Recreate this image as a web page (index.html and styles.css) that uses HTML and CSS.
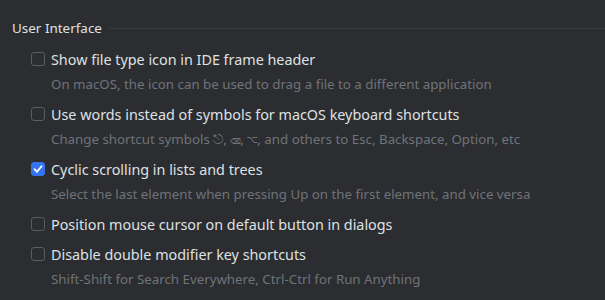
FILE: index.html
```html
<!DOCTYPE html>
<html>
<head>
<meta charset="utf-8">
<link rel="stylesheet" href="styles.css">
</head>
<body>
<div class="group">
  <div class="title-row">
    <span class="title">User Interface</span>
    <span class="sep"></span>
  </div>
  <div class="options">
    <div class="opt">
      <div class="line"><span class="cb"></span><span class="label">Show file type icon in IDE frame header</span></div>
      <div class="desc">On macOS, the icon can be used to drag a file to a different application</div>
    </div>
    <div class="opt">
      <div class="line"><span class="cb"></span><span class="label">Use words instead of symbols for macOS keyboard shortcuts</span></div>
      <div class="desc">Change shortcut symbols ⎋, ⌫, ⌥, and others to Esc, Backspace, Option, etc</div>
    </div>
    <div class="opt">
      <div class="line"><span class="cb checked"><svg viewBox="0 0 14 14" width="14" height="14"><path d="M3.5 7.2 L6 9.8 L10.6 4.2" fill="none" stroke="#fff" stroke-width="1.8" stroke-linecap="round" stroke-linejoin="round"/></svg></span><span class="label">Cyclic scrolling in lists and trees</span></div>
      <div class="desc">Select the last element when pressing Up on the first element, and vice versa</div>
    </div>
    <div class="opt">
      <div class="line"><span class="cb"></span><span class="label">Position mouse cursor on default button in dialogs</span></div>
    </div>
    <div class="opt">
      <div class="line"><span class="cb"></span><span class="label">Disable double modifier key shortcuts</span></div>
      <div class="desc">Shift-Shift for Search Everywhere, Ctrl-Ctrl for Run Anything</div>
    </div>
  </div>
</div>
</body>
</html>
```

FILE: styles.css
```css
html, body {
  margin: 0;
  padding: 0;
  background: #2b2d30;
  width: 605px;
  height: 300px;
  overflow: hidden;
}
body {
  font-family: "Noto Sans", "Open Sans", sans-serif;
  font-size: 13px;
  color: #dfe1e5;
}
.group {
  padding: 18px 0 0 12px;
}
.title-row {
  display: flex;
  align-items: center;
  gap: 7px;
  height: 20px;
  font-size: 13.45px;
}
.title {
  white-space: nowrap;
}
.sep {
  flex: 1;
  height: 1px;
  background: #393b40;
}
.options {
  padding-left: 19px;
  padding-top: 11px;
  display: flex;
  flex-direction: column;
  gap: 10px;
}
.line {
  display: flex;
  align-items: center;
  gap: 6px;
  height: 20px;
  white-space: nowrap;
  font-size: 14.35px;
}
.cb {
  width: 14px;
  height: 14px;
  box-sizing: border-box;
  border: 1px solid #5a5d63;
  border-radius: 3px;
  flex: none;
  display: flex;
}
.cb.checked {
  background: #3574f0;
  border-color: #3574f0;
}
.cb svg {
  margin: -1px;
}
.desc {
  padding-left: 20px;
  margin-top: 5px;
  height: 20px;
  line-height: 20px;
  font-size: 13.3px;
  color: #6f737a;
  white-space: nowrap;
}
```
